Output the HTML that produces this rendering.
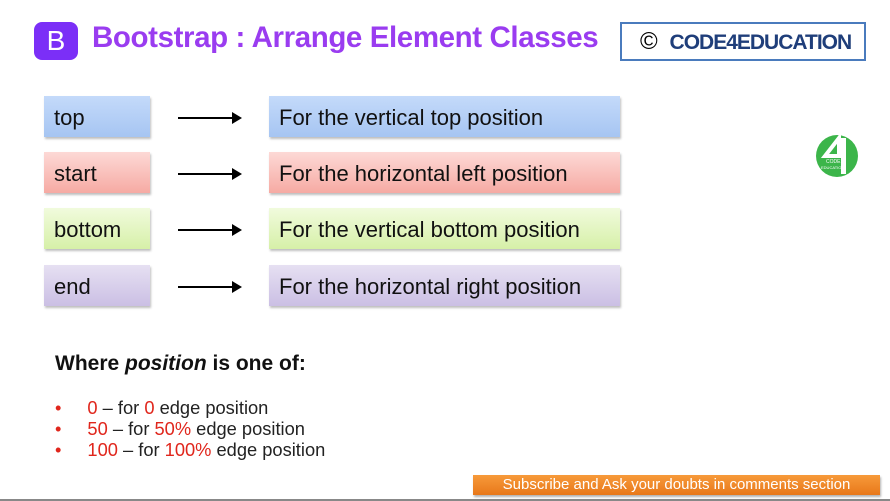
<!DOCTYPE html>
<html><head><style>
body{margin:0;width:890px;height:501px;background:#fff;position:relative;overflow:hidden;font-family:"Liberation Sans",sans-serif}
.a{position:absolute}
.box{position:absolute;height:41px;box-shadow:1px 2px 2px rgba(0,0,0,.25);font-size:22px;color:#111;line-height:43px;padding-left:10px;box-sizing:border-box}
.b{background:linear-gradient(#c4dafa,#a6c5f2)}
.r{background:linear-gradient(#fdd9d6,#f6aaa3)}
.g{background:linear-gradient(#f1fbdd,#d6f0a8)}
.p{background:linear-gradient(#e6e0f2,#cbbfe4)}
.arr{position:absolute;left:178px;width:62px;height:2px;background:#000}
.arr:after{content:"";position:absolute;right:-2px;top:-5px;border-left:10px solid #000;border-top:6px solid transparent;border-bottom:6px solid transparent}
.red{color:#e0261c}
</style></head><body>
<div class="a" style="left:34px;top:22px;width:44px;height:38px;background:#7b2ff7;border-radius:8px;color:#fff;font-size:28px;line-height:38px;text-align:center">B</div>
<div class="a" style="left:92px;top:21px;font-size:29.5px;font-weight:bold;color:#9a3cf0;letter-spacing:-0.4px;white-space:nowrap">Bootstrap : Arrange Element Classes</div>
<div class="a" style="left:620px;top:22px;width:246px;height:39px;border:2px solid #4a7bbd;box-sizing:border-box;color:#1f3e7a;font-size:21px;line-height:36px;white-space:nowrap"><span style="color:#000;margin-left:18px;font-size:24px">©</span> <span style="letter-spacing:-1px;margin-left:6px;font-weight:bold">CODE4EDUCATION</span></div>
<svg class="a" style="left:815px;top:134px" width="44" height="44" viewBox="0 0 44 44">
<circle cx="22" cy="22" r="21" fill="#3cb54a"/>
<path d="M24 4 L24 22 L10 22 Z" fill="none" stroke="#fff" stroke-width="4"/>
<rect x="26" y="4" width="5" height="36" fill="#fff"/>
<text x="11" y="29" font-size="5" fill="#fff" font-family="Liberation Sans">CODE</text>
<text x="6" y="35" font-size="4" fill="#fff" font-family="Liberation Sans">EDUCATION</text>
</svg>

<div class="box b" style="left:44px;top:96px;width:106px">top</div>
<div class="box r" style="left:44px;top:152px;width:106px">start</div>
<div class="box g" style="left:44px;top:208px;width:106px">bottom</div>
<div class="box p" style="left:44px;top:265px;width:106px">end</div>
<div class="arr" style="top:117px"></div>
<div class="arr" style="top:173px"></div>
<div class="arr" style="top:229px"></div>
<div class="arr" style="top:286px"></div>
<div class="box b" style="left:269px;top:96px;width:351px">For the vertical top position</div>
<div class="box r" style="left:269px;top:152px;width:351px">For the horizontal left position</div>
<div class="box g" style="left:269px;top:208px;width:351px">For the vertical bottom position</div>
<div class="box p" style="left:269px;top:265px;width:351px">For the horizontal right position</div>

<div class="a" style="left:55px;top:352px;font-size:21px;font-weight:bold;color:#111;white-space:nowrap">Where <i>position</i> is one of:</div>
<div class="a" style="left:55px;top:397px;font-size:18.3px;line-height:21px;color:#222;white-space:nowrap">
<div><span class="red">•</span><span style="margin-left:26px" class="red">0</span> – for <span class="red">0</span> edge position</div>
<div><span class="red">•</span><span style="margin-left:26px" class="red">50</span> – for <span class="red">50%</span> edge position</div>
<div><span class="red">•</span><span style="margin-left:26px" class="red">100</span> – for <span class="red">100%</span> edge position</div>
</div>
<div class="a" style="left:473px;top:475px;width:407px;height:20px;background:linear-gradient(#f79a3a,#e8781a);color:#fff;font-size:15px;line-height:20px;text-align:center;box-shadow:1px 2px 2px rgba(0,0,0,.3);white-space:nowrap">Subscribe and Ask your doubts in comments section</div>
<div class="a" style="left:0;top:499px;width:890px;height:2px;background:#888"></div>
</body></html>
